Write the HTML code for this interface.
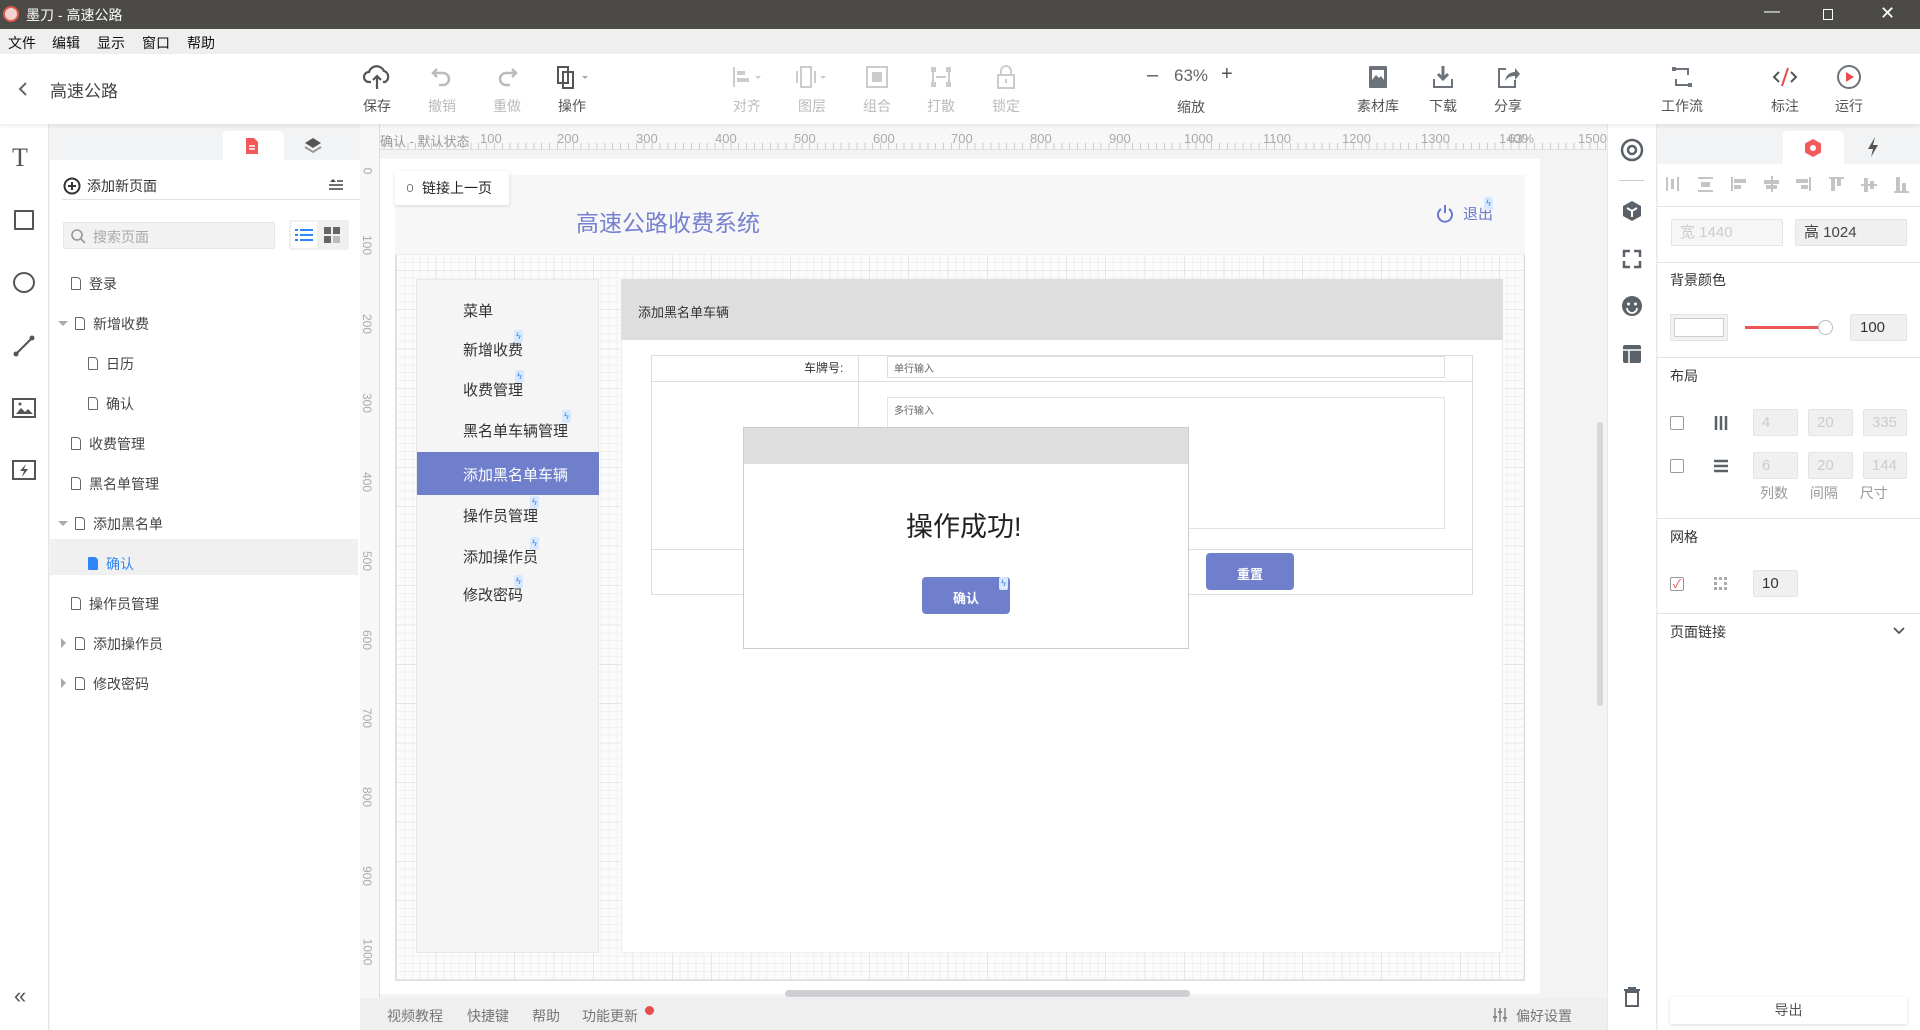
<!DOCTYPE html>
<html><head><meta charset="utf-8"><style>
*{margin:0;padding:0;box-sizing:border-box}
body{width:1920px;height:1030px;overflow:hidden;position:relative;background:#f3f3f3;font-family:"Liberation Sans","Noto Sans CJK SC",sans-serif;color:#333}
.a{position:absolute}
.t{position:absolute;white-space:nowrap}
.tb{position:absolute;top:60px;width:60px;text-align:center;font-size:14px;color:#555}
.tb svg{display:block;margin:4px auto 6px}
.dis{color:#bbb}
.tree{position:absolute;font-size:14px;color:#444;white-space:nowrap}
.fi{display:inline-block;width:10px;height:13px;border:1.5px solid #666;border-radius:1px 4px 1px 1px;vertical-align:-1px;margin-right:8px}
.arr{position:absolute;width:0;height:0;border-left:5px solid transparent;border-right:5px solid transparent;border-top:5px solid #aaa}
.arr2{position:absolute;width:0;height:0;border-top:5px solid transparent;border-bottom:5px solid transparent;border-left:5px solid #aaa}
.mi{position:absolute;left:463px;font-size:15px;color:#333}
.bolt{position:absolute;width:9px;height:13px;background:#d8e8ff;border-radius:2px;color:#2b84f2;font-size:9px;line-height:13px;text-align:center}
.inp{position:absolute;background:#f0f0f0;border:1px solid #e4e4e4;border-radius:2px;font-size:15px;color:#ccc;padding-left:8px;line-height:25px;height:27px}
.sec{position:absolute;left:1670px;font-size:14px;color:#333}
.hl{position:absolute;left:1657px;width:263px;height:1px;background:#e3e3e3}
.cb{position:absolute;width:14px;height:14px;border:1px solid #999;border-radius:2px;background:#fff}
.rl{position:absolute;top:131px;font-size:13px;color:#aaa}
.mn{position:absolute;top:33px;font-size:14px;color:#111}
.st{position:absolute;top:1006px;font-size:14px;color:#777}
</style></head><body>
<!-- title bar -->
<div class="a" style="left:0;top:0;width:1920px;height:29px;background:#4c4a47"></div>
<div class="a" style="left:3px;top:6px;width:16px;height:16px;border-radius:50%;background:#f3d3cf;border:2px solid #e05a4f"></div>
<div class="t" style="left:26px;top:5px;color:#fff;font-size:14px">墨刀 - 高速公路</div>
<div class="t" style="left:1764px;top:3px;color:#fff;font-size:16px">—</div>
<div class="a" style="left:1823px;top:9px;width:10px;height:11px;border:1.5px solid #fff"></div>
<div class="t" style="left:1880px;top:3px;color:#fff;font-size:18px">✕</div>
<!-- menu -->
<div class="a" style="left:0;top:29px;width:1920px;height:25px;background:#efefef"></div>
<div class="mn" style="left:8px">文件</div><div class="mn" style="left:52px">编辑</div><div class="mn" style="left:97px">显示</div><div class="mn" style="left:142px">窗口</div><div class="mn" style="left:187px">帮助</div>
<!-- toolbar -->
<div class="a" style="left:0;top:54px;width:1920px;height:70px;background:#fff;box-shadow:0 2px 4px rgba(0,0,0,.08);z-index:2"></div>
<div style="position:absolute;left:0;top:54px;z-index:3;width:1920px;height:70px">
<svg class="a" style="left:18px;top:27px" width="10" height="16"><path d="M8 2L2 8l6 6" stroke="#666" stroke-width="2" fill="none"/></svg>
<div class="t" style="left:50px;top:23px;font-size:17px;color:#444">高速公路</div>
</div>
<div style="position:absolute;left:0;top:0;z-index:3">
<div class="tb" style="left:347px"><svg width="28" height="26" viewBox="0 0 28 26"><path d="M8 18H6a5 5 0 0 1 0-10 8 8 0 0 1 15-1 6 6 0 0 1 1 11h-2M14 12v13M10 16l4-4 4 4" fill="none" stroke="#555" stroke-width="2.2"/></svg>保存</div>
<div class="tb dis" style="left:412px"><svg width="28" height="26" viewBox="0 0 28 26"><path d="M9 5L5 9l4 4M5 9h10a6 6 0 0 1 0 12h-4" fill="none" stroke="#bbb" stroke-width="2.5"/></svg>撤销</div>
<div class="tb dis" style="left:477px"><svg width="28" height="26" viewBox="0 0 28 26"><path d="M19 5l4 4-4 4M23 9H13a6 6 0 0 0 0 12h4" fill="none" stroke="#bbb" stroke-width="2.5"/></svg>重做</div>
<div class="tb" style="left:542px"><svg width="40" height="26" viewBox="0 0 40 26"><rect x="6" y="3" width="10" height="16" fill="none" stroke="#555" stroke-width="2"/><rect x="11" y="8" width="10" height="16" fill="none" stroke="#555" stroke-width="2"/><path d="M30 12h6l-3 3z" fill="#aaa"/></svg>操作</div>
<div class="tb dis" style="left:717px"><svg width="40" height="26" viewBox="0 0 40 26"><path d="M7 3v20" stroke="#ccc" stroke-width="2"/><rect x="10" y="7" width="8" height="4" fill="#ccc"/><rect x="10" y="14" width="12" height="4" fill="#ccc"/><path d="M28 12h6l-3 3z" fill="#ccc"/></svg>对齐</div>
<div class="tb dis" style="left:782px"><svg width="40" height="26" viewBox="0 0 40 26"><rect x="9" y="3" width="10" height="20" fill="none" stroke="#ccc" stroke-width="2"/><path d="M5 7v12M23 7v12" stroke="#ccc" stroke-width="2"/><path d="M28 12h6l-3 3z" fill="#ccc"/></svg>图层</div>
<div class="tb dis" style="left:847px"><svg width="28" height="26" viewBox="0 0 28 26"><rect x="4" y="3" width="20" height="20" fill="none" stroke="#ccc" stroke-width="2"/><rect x="9" y="8" width="10" height="10" fill="#ccc"/></svg>组合</div>
<div class="tb dis" style="left:911px"><svg width="28" height="26" viewBox="0 0 28 26"><rect x="4" y="3" width="5" height="5" fill="#ccc"/><rect x="19" y="3" width="5" height="5" fill="#ccc"/><rect x="4" y="18" width="5" height="5" fill="#ccc"/><rect x="19" y="18" width="5" height="5" fill="#ccc"/><path d="M6 8v10M22 8v10M9 13h10" stroke="#ccc" stroke-width="2"/></svg>打散</div>
<div class="tb dis" style="left:976px"><svg width="28" height="26" viewBox="0 0 28 26"><path d="M9 11V7a5 5 0 0 1 10 0v4" fill="none" stroke="#ccc" stroke-width="2"/><rect x="6" y="11" width="16" height="13" fill="none" stroke="#ccc" stroke-width="2"/><rect x="13" y="15" width="2" height="4" fill="#ccc"/></svg>锁定</div>
<div class="t" style="left:1147px;top:64px;font-size:20px;color:#555">–</div>
<div class="t" style="left:1174px;top:66px;font-size:17px;color:#666">63%</div>
<div class="t" style="left:1221px;top:63px;font-size:20px;color:#555">+</div>
<div class="t" style="left:1177px;top:97px;font-size:14px;color:#555">缩放</div>
<div class="tb" style="left:1348px"><svg width="28" height="26" viewBox="0 0 28 26"><rect x="5" y="2" width="18" height="22" rx="1" fill="#6c737a"/><rect x="8" y="6" width="12" height="10" fill="#fff"/><path d="M8 16l4-5 3 3 2-2 3 4z" fill="#6c737a"/></svg>素材库</div>
<div class="tb" style="left:1413px"><svg width="28" height="26" viewBox="0 0 28 26"><path d="M14 2v13M9 10l5 5 5-5" fill="none" stroke="#6c737a" stroke-width="3"/><path d="M5 15v8h18v-8" fill="none" stroke="#6c737a" stroke-width="2"/></svg>下载</div>
<div class="tb" style="left:1478px"><svg width="28" height="26" viewBox="0 0 28 26"><path d="M12 5H5v18h16v-7" fill="none" stroke="#6c737a" stroke-width="2"/><path d="M11 17c1-6 5-9 10-9V4l5 6-5 6v-4c-4 0-7 1-10 5z" fill="#6c737a"/></svg>分享</div>
<div class="tb" style="left:1652px"><svg width="28" height="26" viewBox="0 0 28 26"><path d="M6 5h14v6M22 21H8v-6" fill="none" stroke="#6c737a" stroke-width="2"/><rect x="4" y="3" width="4" height="4" fill="#6c737a"/><rect x="20" y="19" width="4" height="4" fill="#6c737a"/></svg>工作流</div>
<div class="tb" style="left:1755px"><svg width="28" height="26" viewBox="0 0 28 26"><path d="M8 8l-5 5 5 5M20 8l5 5-5 5" fill="none" stroke="#555" stroke-width="2"/><path d="M17 4l-6 18" stroke="#e84c4c" stroke-width="2"/></svg>标注</div>
<div class="tb" style="left:1819px"><svg width="28" height="26" viewBox="0 0 28 26"><circle cx="14" cy="13" r="11" fill="none" stroke="#6c737a" stroke-width="2"/><path d="M11 8v10l8-5z" fill="#e84c4c"/></svg>运行</div>
</div>
<!-- left tool column -->
<div class="a" style="left:0;top:124px;width:49px;height:906px;background:#fff;border-right:1px solid #e5e5e5"></div>
<div class="t" style="left:12px;top:143px;font-size:26px;color:#555;font-family:'Liberation Serif',serif">T</div>
<div class="a" style="left:14px;top:210px;width:20px;height:20px;border:2px solid #555;border-radius:1px"></div>
<div class="a" style="left:13px;top:272px;width:22px;height:21px;border:2px solid #555;border-radius:50%"></div>
<svg class="a" style="left:13px;top:335px" width="22" height="22"><path d="M3 19L19 3" stroke="#555" stroke-width="2"/><circle cx="3" cy="19" r="2.5" fill="#555"/><circle cx="19" cy="3" r="2.5" fill="#555"/></svg>
<svg class="a" style="left:12px;top:397px" width="24" height="22"><rect x="1" y="2" width="22" height="18" fill="none" stroke="#555" stroke-width="2"/><path d="M4 17l5-6 4 4 3-3 5 5z" fill="#555"/><circle cx="8" cy="7" r="1.5" fill="#555"/></svg>
<svg class="a" style="left:12px;top:459px" width="24" height="22"><rect x="1" y="2" width="22" height="18" fill="none" stroke="#555" stroke-width="2"/><path d="M14 5l-6 7h4l-2 6 6-8h-4z" fill="#555"/></svg>
<div class="t" style="left:14px;top:983px;font-size:22px;color:#555">«</div>
<!-- pages panel -->
<div class="a" style="left:50px;top:124px;width:310px;height:906px;background:#fff"></div>
<div class="a" style="left:50px;top:124px;width:310px;height:36px;background:#f2f3f4"></div>
<div class="a" style="left:223px;top:131px;width:61px;height:30px;background:#fff;border-radius:4px 4px 0 0"></div>
<svg class="a" style="left:245px;top:137px" width="14" height="18"><path d="M1 1h8l4 4v12H1z" fill="#f25a5a"/><path d="M4 9h6M4 12h6" stroke="#fff" stroke-width="1.5"/></svg>
<svg class="a" style="left:304px;top:137px" width="18" height="18"><path d="M9 1l8 5-8 5-8-5z" fill="#555"/><path d="M1 10l8 5 8-5" fill="none" stroke="#999" stroke-width="2"/></svg>
<svg class="a" style="left:63px;top:177px" width="18" height="18"><circle cx="9" cy="9" r="7.5" fill="none" stroke="#333" stroke-width="2"/><path d="M9 5v8M5 9h8" stroke="#333" stroke-width="2"/></svg>
<div class="t" style="left:87px;top:176px;font-size:14px;color:#333">添加新页面</div>
<svg class="a" style="left:328px;top:178px" width="16" height="14"><path d="M5 1l3 3H2z" fill="#444"/><path d="M9 3h6M1 7h14M1 11h14" stroke="#444" stroke-width="1.5"/></svg>
<div class="a" style="left:62px;top:199px;width:298px;height:1px;background:#e3e3e3"></div>
<div class="a" style="left:63px;top:222px;width:212px;height:27px;background:#f2f2f2;border:1px solid #e6e6e6;border-radius:2px"></div>
<svg class="a" style="left:70px;top:228px" width="16" height="16"><circle cx="7" cy="7" r="5" fill="none" stroke="#999" stroke-width="1.6"/><path d="M11 11l4 4" stroke="#999" stroke-width="1.6"/></svg>
<div class="t" style="left:93px;top:227px;font-size:14px;color:#aaa">搜索页面</div>
<div class="a" style="left:289px;top:220px;width:60px;height:30px;background:#f0f0f0;border-radius:2px"></div>
<div class="a" style="left:291px;top:222px;width:26px;height:26px;background:#fff"></div>
<svg class="a" style="left:295px;top:228px" width="18" height="14"><path d="M0 2h3M5 2h13M0 7h3M5 7h13M0 12h3M5 12h13" stroke="#2f86f6" stroke-width="2"/></svg>
<svg class="a" style="left:324px;top:227px" width="16" height="16"><rect x="0" y="0" width="7" height="7" fill="#666"/><rect x="9" y="0" width="7" height="7" fill="#666"/><rect x="0" y="9" width="7" height="7" fill="#666"/><rect x="9" y="9" width="7" height="7" fill="#bbb"/></svg>
<div class="a" style="left:50px;top:539px;width:308px;height:36px;background:#f0f0f0"></div>
<div class="tree" style="left:71px;top:274px"><span class="fi"></span>登录</div>
<div class="arr" style="left:58px;top:321px"></div>
<div class="tree" style="left:75px;top:314px"><span class="fi"></span>新增收费</div>
<div class="tree" style="left:88px;top:354px"><span class="fi"></span>日历</div>
<div class="tree" style="left:88px;top:394px"><span class="fi"></span>确认</div>
<div class="tree" style="left:71px;top:434px"><span class="fi"></span>收费管理</div>
<div class="tree" style="left:71px;top:474px"><span class="fi"></span>黑名单管理</div>
<div class="arr" style="left:58px;top:521px"></div>
<div class="tree" style="left:75px;top:514px"><span class="fi"></span>添加黑名单</div>
<div class="tree" style="left:88px;top:554px;color:#2f86f6"><span class="fi" style="background:#2f86f6;border-color:#2f86f6"></span>确认</div>
<div class="tree" style="left:71px;top:594px"><span class="fi"></span>操作员管理</div>
<div class="arr2" style="left:61px;top:638px"></div>
<div class="tree" style="left:75px;top:634px"><span class="fi"></span>添加操作员</div>
<div class="arr2" style="left:61px;top:678px"></div>
<div class="tree" style="left:75px;top:674px"><span class="fi"></span>修改密码</div>
<!-- canvas -->
<div class="a" style="left:360px;top:124px;width:1247px;height:874px;background:#f3f3f3"></div>
<div class="a" style="left:360px;top:124px;width:1247px;height:26px;background:#f7f7f7;border-bottom:1px solid #ddd;background-image:repeating-linear-gradient(90deg,#ccc 0 1px,transparent 1px 7.88px);background-size:100% 6px;background-repeat:no-repeat;background-position:0 19px"></div>
<div class="a" style="left:360px;top:124px;width:20px;height:874px;background:#f7f7f7;border-right:1px solid #ddd"></div>
<div class="t" style="left:380px;top:131px;font-size:13px;color:#999">确认 - 默认状态</div>
<div class="rl" style="left:480px">100</div>
<div class="rl" style="left:557px">200</div>
<div class="rl" style="left:636px">300</div>
<div class="rl" style="left:715px">400</div>
<div class="rl" style="left:794px">500</div>
<div class="rl" style="left:873px">600</div>
<div class="rl" style="left:951px">700</div>
<div class="rl" style="left:1030px">800</div>
<div class="rl" style="left:1109px">900</div>
<div class="rl" style="left:1184px">1000</div>
<div class="rl" style="left:1263px">1100</div>
<div class="rl" style="left:1342px">1200</div>
<div class="rl" style="left:1421px">1300</div>
<div class="rl" style="left:1499px">1400</div>
<div class="rl" style="left:1508px">63%</div>
<div class="rl" style="left:1578px">1500</div>
<div style="position:absolute;left:361px;top:160px;width:18px;font-size:12px;color:#aaa">
<div class="t" style="top:4px;left:3px;transform:rotate(90deg)">0</div>
<div class="t" style="top:78px;left:-4px;transform:rotate(90deg)">100</div>
<div class="t" style="top:157px;left:-4px;transform:rotate(90deg)">200</div>
<div class="t" style="top:236px;left:-4px;transform:rotate(90deg)">300</div>
<div class="t" style="top:315px;left:-4px;transform:rotate(90deg)">400</div>
<div class="t" style="top:394px;left:-4px;transform:rotate(90deg)">500</div>
<div class="t" style="top:473px;left:-4px;transform:rotate(90deg)">600</div>
<div class="t" style="top:551px;left:-4px;transform:rotate(90deg)">700</div>
<div class="t" style="top:630px;left:-4px;transform:rotate(90deg)">800</div>
<div class="t" style="top:709px;left:-4px;transform:rotate(90deg)">900</div>
<div class="t" style="top:785px;left:-7px;transform:rotate(90deg)">1000</div>
</div>
<!-- artboard -->
<div class="a" style="left:380px;top:159px;width:1160px;height:835px;background:#fff"></div>
<div class="a" style="left:395px;top:175px;width:1130px;height:806px;background-color:#fcfcfc;background-image:repeating-linear-gradient(90deg,#e6e6e6 0 1px,transparent 1px 39.4px),repeating-linear-gradient(0deg,#e6e6e6 0 1px,transparent 1px 39.4px),repeating-linear-gradient(90deg,#f1f1f1 0 1px,transparent 1px 7.88px),repeating-linear-gradient(0deg,#f1f1f1 0 1px,transparent 1px 7.88px);border:1px solid #ddd"></div>
<div class="a" style="left:395px;top:175px;width:1130px;height:80px;background:#f7f7f7;border-bottom:1px solid #eee"></div>
<div class="a" style="left:395px;top:171px;width:114px;height:34px;background:#fff;box-shadow:0 1px 4px rgba(0,0,0,.12);border-radius:2px"></div>
<div class="a" style="left:407px;top:184px;width:6px;height:8px;border:1.5px solid #777;border-radius:3px"></div>
<div class="t" style="left:422px;top:178px;font-size:14px;color:#222">链接上一页</div>
<div class="t" style="left:576px;top:204px;font-size:23px;color:#7680d0">高速公路收费系统</div>
<svg class="a" style="left:1436px;top:203px" width="18" height="20"><path d="M5 6a7 7 0 1 0 8 0" fill="none" stroke="#6c79cf" stroke-width="2"/><path d="M9 2v8" stroke="#6c79cf" stroke-width="2"/></svg>
<div class="t" style="left:1463px;top:203px;font-size:15px;color:#6c79cf">退出</div>
<div class="bolt" style="left:1484px;top:197px">ϟ</div>
<!-- menu panel -->
<div class="a" style="left:416px;top:279px;width:183px;height:674px;background:#f5f5f5;border:1px solid #e8e8e8"></div>
<div class="mi" style="top:300px">菜单</div>
<div class="mi" style="top:339px">新增收费</div><div class="bolt" style="left:514px;top:330px">ϟ</div>
<div class="mi" style="top:379px">收费管理</div><div class="bolt" style="left:515px;top:370px">ϟ</div>
<div class="mi" style="top:420px">黑名单车辆管理</div><div class="bolt" style="left:562px;top:410px">ϟ</div>
<div class="a" style="left:417px;top:452px;width:182px;height:43px;background:#6f7fcc"></div>
<div class="mi" style="top:464px;color:#fff">添加黑名单车辆</div>
<div class="mi" style="top:505px">操作员管理</div><div class="bolt" style="left:530px;top:496px">ϟ</div>
<div class="mi" style="top:546px">添加操作员</div><div class="bolt" style="left:530px;top:537px">ϟ</div>
<div class="mi" style="top:584px">修改密码</div><div class="bolt" style="left:514px;top:575px">ϟ</div>
<!-- content -->
<div class="a" style="left:621px;top:279px;width:882px;height:674px;background:#fff;border:1px solid #eee"></div>
<div class="a" style="left:621px;top:279px;width:882px;height:61px;background:#dedede"></div>
<div class="t" style="left:638px;top:302px;font-size:13px;color:#333">添加黑名单车辆</div>
<div class="a" style="left:651px;top:355px;width:822px;height:240px;border:1px solid #ddd;background:#fff"></div>
<div class="a" style="left:651px;top:381px;width:822px;height:1px;background:#ddd"></div>
<div class="a" style="left:651px;top:549px;width:822px;height:1px;background:#ddd"></div>
<div class="a" style="left:858px;top:355px;width:1px;height:194px;background:#ddd"></div>
<div class="t" style="left:804px;top:359px;font-size:12px;color:#333">车牌号:</div>
<div class="a" style="left:887px;top:356px;width:558px;height:22px;border:1px solid #ddd"></div>
<div class="t" style="left:894px;top:360px;font-size:10px;color:#666">单行输入</div>
<div class="a" style="left:887px;top:397px;width:558px;height:132px;border:1px solid #e3e3e3"></div>
<div class="t" style="left:894px;top:402px;font-size:10px;color:#666">多行输入</div>
<div class="a" style="left:1206px;top:553px;width:88px;height:37px;background:#6f7fcc;border-radius:4px"></div>
<div class="t" style="left:1237px;top:564px;font-size:13px;color:#fff;font-weight:bold">重置</div>
<!-- dialog -->
<div class="a" style="left:743px;top:427px;width:446px;height:222px;background:#fff;border:1px solid #ccc"></div>
<div class="a" style="left:744px;top:428px;width:444px;height:36px;background:#dedede"></div>
<div class="t" style="left:906px;top:505px;font-size:27px;color:#222">操作成功!</div>
<div class="a" style="left:922px;top:577px;width:88px;height:37px;background:#6f7fcc;border-radius:4px"></div>
<div class="t" style="left:953px;top:588px;font-size:13px;color:#fff;font-weight:bold">确认</div>
<div class="bolt" style="left:999px;top:577px">ϟ</div>
<!-- scrollbars -->
<div class="a" style="left:785px;top:990px;width:405px;height:7px;background:#cfcfd3;border-radius:4px"></div>
<div class="a" style="left:1597px;top:422px;width:6px;height:284px;background:#d7d7d7;border-radius:3px"></div>
<!-- status -->
<div class="a" style="left:360px;top:998px;width:1247px;height:32px;background:#efefef"></div>
<div class="st" style="left:387px">视频教程</div><div class="st" style="left:467px">快捷键</div><div class="st" style="left:532px">帮助</div><div class="st" style="left:582px">功能更新</div>
<div class="a" style="left:645px;top:1006px;width:9px;height:9px;border-radius:50%;background:#e84c4c"></div>
<svg class="a" style="left:1493px;top:1008px" width="14" height="14"><path d="M2 0v14M7 0v14M12 0v14" stroke="#888" stroke-width="1.5"/><rect x="0" y="8" width="4" height="2" fill="#888"/><rect x="5" y="3" width="4" height="2" fill="#888"/><rect x="10" y="9" width="4" height="2" fill="#888"/></svg>
<div class="st" style="left:1516px">偏好设置</div>
<!-- right icon column -->
<div class="a" style="left:1607px;top:124px;width:50px;height:906px;background:#fff;border-left:1px solid #e8e8e8;border-right:1px solid #e8e8e8"></div>
<svg class="a" style="left:1620px;top:138px" width="24" height="24"><circle cx="12" cy="12" r="10" fill="none" stroke="#5a6168" stroke-width="2.5"/><circle cx="12" cy="12" r="4" fill="none" stroke="#5a6168" stroke-width="2.5"/></svg>
<div class="a" style="left:1619px;top:180px;width:25px;height:1px;background:#ccc"></div>
<svg class="a" style="left:1622px;top:200px" width="20" height="22"><path d="M10 1l9 5v10l-9 5-9-5V6z" fill="#5a6168"/><path d="M5 8l5 3 5-3M10 11v6" stroke="#fff" stroke-width="2" fill="none"/></svg>
<svg class="a" style="left:1622px;top:249px" width="20" height="20"><path d="M2 8V2h6M12 2h6v6M18 12v6h-6M2 12v6h6" fill="none" stroke="#5a6168" stroke-width="2.5"/></svg>
<svg class="a" style="left:1621px;top:295px" width="22" height="22"><circle cx="11" cy="11" r="10" fill="#5a6168"/><circle cx="7.5" cy="9" r="1.5" fill="#fff"/><circle cx="14.5" cy="9" r="1.5" fill="#fff"/><path d="M6 13a5 5 0 0 0 10 0" stroke="#fff" stroke-width="1.8" fill="none"/></svg>
<svg class="a" style="left:1622px;top:344px" width="20" height="20"><rect x="1" y="1" width="18" height="18" rx="2" fill="#5a6168"/><path d="M1 6h18M7 6v13" stroke="#fff" stroke-width="1.5"/></svg>
<svg class="a" style="left:1623px;top:987px" width="18" height="20"><path d="M1 3h16M6 3V1h6v2" stroke="#5a6168" stroke-width="2" fill="none"/><rect x="3" y="5" width="12" height="14" fill="none" stroke="#5a6168" stroke-width="2"/></svg>
<!-- right panel -->
<div class="a" style="left:1658px;top:124px;width:262px;height:906px;background:#fff"></div>
<div class="a" style="left:1658px;top:124px;width:262px;height:40px;background:#f2f3f4"></div>
<div class="a" style="left:1783px;top:131px;width:61px;height:34px;background:#fff;border-radius:4px 4px 0 0"></div>
<svg class="a" style="left:1804px;top:138px" width="18" height="20"><path d="M9 1l8 4.5v9L9 19l-8-4.5v-9z" fill="#f25a5a"/><circle cx="9" cy="10" r="3" fill="#fff"/></svg>
<svg class="a" style="left:1866px;top:136px" width="14" height="22"><path d="M9 1L2 13h5l-2 8 7-12H7z" fill="#555"/></svg>
<svg class="a" style="left:1665px;top:174px" width="255" height="22">
<g fill="#c4c4c4"><rect x="1" y="3" width="2" height="14"/><rect x="6" y="5" width="3" height="10"/><rect x="12" y="3" width="2" height="14"/>
<rect x="33" y="3" width="15" height="2"/><rect x="36" y="8" width="9" height="5"/><rect x="33" y="16" width="15" height="2"/>
<rect x="66" y="3" width="2" height="14"/><rect x="69" y="5" width="12" height="4"/><rect x="69" y="11" width="7" height="4"/>
<rect x="99" y="6" width="15" height="4"/><rect x="101" y="11" width="11" height="4"/><rect x="106" y="2" width="2" height="16"/>
<rect x="131" y="5" width="12" height="4"/><rect x="136" y="11" width="7" height="4"/><rect x="144" y="3" width="2" height="14"/>
<rect x="164" y="3" width="15" height="2"/><rect x="166" y="5" width="4" height="12"/><rect x="172" y="5" width="4" height="7"/>
<rect x="196" y="10" width="16" height="2"/><rect x="199" y="4" width="4" height="14"/><rect x="205" y="7" width="4" height="8"/>
<rect x="229" y="17" width="15" height="2"/><rect x="231" y="3" width="4" height="14"/><rect x="237" y="9" width="4" height="8"/></g></svg>
<div class="hl" style="top:206px"></div>
<div class="inp" style="left:1671px;top:219px;width:112px;background:#f6f6f6">宽 1440</div>
<div class="inp" style="left:1795px;top:219px;width:112px;color:#444">高 1024</div>
<div class="hl" style="top:262px"></div>
<div class="sec" style="top:270px">背景颜色</div>
<div class="a" style="left:1670px;top:314px;width:58px;height:27px;background:#f2f2f2;border:1px solid #e4e4e4"></div>
<div class="a" style="left:1674px;top:318px;width:50px;height:19px;background:#fff;border:1px solid #ccc"></div>
<div class="a" style="left:1745px;top:326px;width:74px;height:3px;background:#ee5757"></div>
<div class="a" style="left:1818px;top:320px;width:15px;height:15px;border-radius:50%;background:#fff;border:1px solid #bbb"></div>
<div class="inp" style="left:1850px;top:314px;width:57px;color:#333;padding-left:9px">100</div>
<div class="hl" style="top:357px"></div>
<div class="sec" style="top:366px">布局</div>
<div class="cb" style="left:1670px;top:416px"></div>
<svg class="a" style="left:1714px;top:416px" width="14" height="14"><path d="M2 0v14M7 0v14M12 0v14" stroke="#5a6168" stroke-width="2.5"/></svg>
<div class="inp" style="left:1753px;top:409px;width:45px">4</div>
<div class="inp" style="left:1808px;top:409px;width:45px">20</div>
<div class="inp" style="left:1863px;top:409px;width:44px">335</div>
<div class="cb" style="left:1670px;top:459px"></div>
<svg class="a" style="left:1714px;top:459px" width="14" height="14"><path d="M0 2h14M0 7h14M0 12h14" stroke="#5a6168" stroke-width="2.5"/></svg>
<div class="inp" style="left:1753px;top:452px;width:45px">6</div>
<div class="inp" style="left:1808px;top:452px;width:45px">20</div>
<div class="inp" style="left:1863px;top:452px;width:44px">144</div>
<div class="t" style="left:1760px;top:483px;font-size:14px;color:#999;word-spacing:18px">列数 间隔 尺寸</div>
<div class="hl" style="top:518px"></div>
<div class="sec" style="top:527px">网格</div>
<div class="cb" style="left:1670px;top:577px;color:#e84c4c;font-size:12px;line-height:12px;text-align:center">✓</div>
<svg class="a" style="left:1714px;top:577px" width="14" height="14" fill="#aaa"><rect x="0" y="0" width="3" height="3"/><rect x="5" y="0" width="3" height="3"/><rect x="10" y="0" width="3" height="3"/><rect x="0" y="5" width="3" height="3"/><rect x="10" y="5" width="3" height="3"/><rect x="0" y="10" width="3" height="3"/><rect x="5" y="10" width="3" height="3"/><rect x="10" y="10" width="3" height="3"/></svg>
<div class="inp" style="left:1753px;top:570px;width:45px;color:#333">10</div>
<div class="hl" style="top:613px"></div>
<div class="sec" style="top:622px">页面链接</div>
<svg class="a" style="left:1893px;top:627px" width="12" height="8"><path d="M1 1l5 5 5-5" stroke="#555" stroke-width="1.8" fill="none"/></svg>
<div class="a" style="left:1670px;top:997px;width:237px;height:27px;background:#fff;box-shadow:0 1px 3px rgba(0,0,0,.15);border-radius:2px;text-align:center;font-size:14px;color:#555;line-height:27px">导出</div>
</body></html>
